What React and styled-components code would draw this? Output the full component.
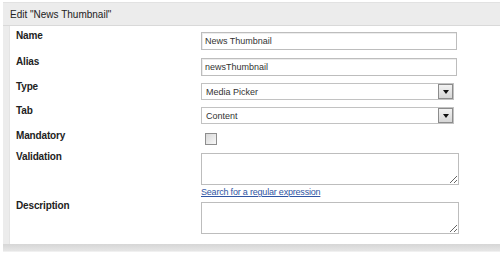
import React from 'react';
import styled, { createGlobalStyle } from 'styled-components';

const GlobalStyle = createGlobalStyle`
  html, body {
    margin: 0;
    padding: 0;
    background: #fff;
  }
  body {
    font-family: 'Liberation Sans', Arial, sans-serif;
  }
`;

const Panel = styled.div`
  margin: 2px 0 0 3px;
  background: #ececec;
  border-top: 1px solid #e2e2e2;
  border-bottom: 1px solid #f0f0f0;
`;

const Header = styled.div`
  height: 22px;
  padding-left: 7px;
  display: flex;
  align-items: center;
  font-size: 10px;
  color: #222;
  border-bottom: 1px solid #d9d9d9;
`;

const Body = styled.div`
  margin-left: 7px;
  background: #fff;
  padding: 6px 0 10px 0;
  display: flex;
  flex-direction: column;
  box-shadow: -1px 0 0 #e4e4e4;
`;

const Footer = styled.div`
  height: 7px;
  background: linear-gradient(#d6d6d6, #e6e6e6);
`;

const Row = styled.div`
  display: flex;
  align-items: flex-start;
  margin-bottom: ${(p) => p.$after ?? 7}px;
`;

const Label = styled.div`
  width: 185px;
  padding-left: 6px;
  margin-top: -2px;
  font-size: 10px;
  line-height: 12px;
  font-weight: bold;
  color: #222;
  letter-spacing: -0.15px;
`;

const Field = styled.div`
  display: flex;
  flex-direction: column;
`;

const TextInput = styled.input`
  box-sizing: border-box;
  width: 256px;
  height: 18px;
  margin: 0;
  padding: 0 3px;
  border: 1px solid #bdbdbd;
  box-shadow: inset 1px 1px 0 #ececec;
  font-family: 'Liberation Sans', Arial, sans-serif;
  font-size: 9px;
  color: #333;
  outline: none;
`;

const SelectBox = styled.div`
  box-sizing: border-box;
  width: 253px;
  height: 17px;
  display: flex;
  align-items: stretch;
  border: 1px solid #c2c2c2;
  background: #fff;
`;

const SelectValue = styled.span`
  flex: 1;
  display: flex;
  align-items: center;
  padding-left: 4px;
  font-size: 9px;
  color: #333;
`;

const ArrowButton = styled.span`
  width: 13px;
  margin: 0;
  border: 1px solid #8c8c8c;
  background: linear-gradient(#f2f2f2, #d6d6d6);
  display: flex;
  align-items: center;
  justify-content: center;

  &::after {
    content: '';
    border-left: 3px solid transparent;
    border-right: 3px solid transparent;
    border-top: 4px solid #111;
  }
`;

const Checkbox = styled.input`
  appearance: none;
  box-sizing: border-box;
  width: 12px;
  height: 12px;
  margin: 1px 0 1px 4px;
  border: 1px solid #8e8e8e;
  background: linear-gradient(135deg, #d8d8d8, #f8f8f8);
`;

const TextArea = styled.textarea`
  box-sizing: border-box;
  width: 258px;
  height: 32px;
  margin: 0;
  padding: 2px 3px;
  border: 1px solid #bdbdbd;
  font-family: 'Liberation Sans', Arial, sans-serif;
  font-size: 9px;
  outline: none;
`;

const HelpLink = styled.a`
  display: block;
  margin-top: 1px;
  font-size: 9px;
  line-height: 12px;
  letter-spacing: -0.2px;
  color: #2f55a4;
  text-decoration: underline;
  cursor: pointer;
`;

const Select = ({ value }) => (
  <SelectBox>
    <SelectValue>{value}</SelectValue>
    <ArrowButton />
  </SelectBox>
);

const App = () => {
  return (
    <>
      <GlobalStyle />
      <Panel>
        <Header>Edit "News Thumbnail"</Header>
        <Body>
          <Row $after={8}>
            <Label>Name</Label>
            <TextInput defaultValue="News Thumbnail" />
          </Row>
          <Row>
            <Label>Alias</Label>
            <TextInput defaultValue="newsThumbnail" />
          </Row>
          <Row>
            <Label>Type</Label>
            <Select value="Media Picker" />
          </Row>
          <Row $after={8}>
            <Label>Tab</Label>
            <Select value="Content" />
          </Row>
          <Row $after={7}>
            <Label>Mandatory</Label>
            <Checkbox type="checkbox" />
          </Row>
          <Row $after={4}>
            <Label>Validation</Label>
            <Field>
              <TextArea />
              <HelpLink>Search for a regular expression</HelpLink>
            </Field>
          </Row>
          <Row $after={0}>
            <Label>Description</Label>
            <TextArea />
          </Row>
        </Body>
        <Footer />
      </Panel>
    </>
  );
};

export default App;
